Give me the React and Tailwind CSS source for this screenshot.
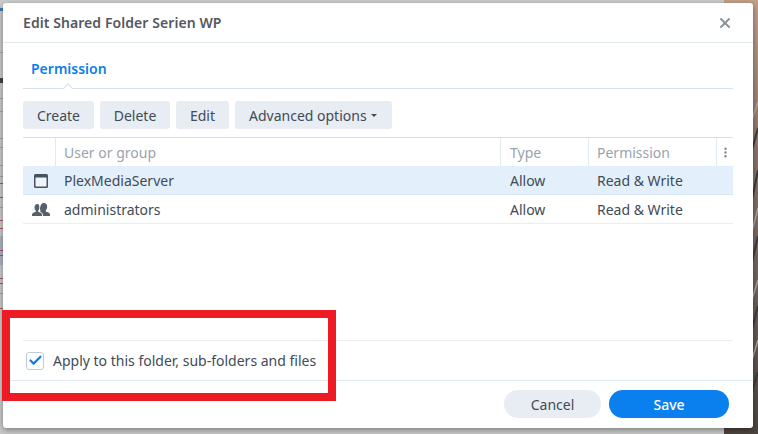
import React from 'react';
import { X, Check, EllipsisVertical } from 'lucide-react';

const rows = [
  { name: 'PlexMediaServer', icon: 'app', selected: true },
  { name: 'administrators', icon: 'group', selected: false },
];

const redTicks = [183, 197, 220, 228, 250, 255, 278, 283, 308];
const grayTicks = [52, 98, 111, 138, 147, 165, 176, 207, 293];

const AppIcon = () => (
  <svg width="14" height="14" viewBox="0 0 14 14" fill="none">
    <rect x="0" y="0" width="14" height="14" rx="1.500" fill="#46525f" />
    <rect x="1.500" y="3.500" width="11" height="9" fill="#eef4fa" />
  </svg>
);

const GroupIcon = () => (
  <svg width="18" height="13" viewBox="0 0 18 13" fill="#55606c">
    <path d="M11.800 0c2.200 0 3.400 1.600 3.400 3.700 0 1.500-.6 2.800-1.400 3.500v1.300c1.500.5 4.200 1.300 4.200 2.800V13h-7v-1.300c0-1.300-1.200-2.200-2.600-2.800V7.200C7.600 6.500 8 5 8.400 3.500 8.800 1.500 10 0 11.800 0z" />
    <path d="M5.600 1C3.600 1 2.500 2.500 2.500 4.400c0 1.300.5 2.500 1.300 3.200v1.200C2.400 9.300 0 10 0 11.500V13h10v-1.500c0-1.500-2.400-2.200-3.800-2.700V7.600C7 6.900 7.300 5.700 7.300 4.400 7.300 2.500 7 1 5.600 1z" />
  </svg>
);

export default function App() {
  return (
    <div className="relative w-[758px] h-[434px] overflow-hidden bg-[#cbcbcb] pt-[3px] pl-[3px] font-['Noto_Sans',sans-serif] text-[14px] text-[#414b55]">
      {/* what shows of the desktop behind the dialog */}
      <svg className="absolute inset-0" width="758" height="434" viewBox="0 0 758 434">
        <defs>
          <linearGradient id="wall" x1="0" y1="0" x2="0" y2="1">
            <stop offset="0" stopColor="#c4a08a" />
            <stop offset="0.35" stopColor="#8a7468" />
            <stop offset="0.65" stopColor="#6f625c" />
            <stop offset="1" stopColor="#4d443f" />
          </linearGradient>
        </defs>
        <rect x="724" y="0" width="34" height="434" fill="url(#wall)" />
        <path d="M752 150l6-22M752 200l6-30M752 262l6-26M752 330l6-24M752 392l6-20" stroke="#3f3a3a" strokeWidth="2" />
        <path d="M752 120l6-18M752 232l6-24M752 300l6-20M752 360l6-20" stroke="#b5a69c" strokeWidth="1.500" />
        <rect x="0" y="236" width="3" height="29" fill="#aeb6c0" />
        {grayTicks.map((y) => (
          <rect key={y} x="0" y={y} width="3" height="1" fill="#9aa4ae" />
        ))}
        {redTicks.map((y) => (
          <rect key={y} x="0" y={y} width="3" height="1" fill="#b8525a" />
        ))}
        <rect x="0" y="8" width="3" height="3" fill="#3d7fc0" />
        <rect x="0" y="78" width="3" height="5" fill="#4a4038" />
      </svg>

      <div className="relative flex flex-col w-[750px] h-[425px] bg-white rounded-[3px] shadow-[0_2px_6px_rgba(0,0,0,0.4)]">
        <div className="flex items-center justify-between h-[40px] px-[20px] border-b border-[#e3e9f0] shrink-0">
          <span className="font-semibold text-[#55595e] tracking-[0.07px]">Edit Shared Folder Serien WP</span>
          <X size={16} strokeWidth={3} className="text-[#8b939b]" />
        </div>

        <div className="flex flex-col flex-1 px-[20px] min-h-0">
          <div className="relative h-[46px] border-b border-[#d7e1ec] shrink-0 pt-[17px] pl-[8px]">
            <span className="font-semibold text-[#0a7fee] leading-[18px] block">Permission</span>
            <span className="absolute left-[39px] bottom-[-1px] w-[11px] h-[6px] overflow-hidden">
              <span className="block w-[8px] h-[8px] ml-[1.500px] mt-[2px] rotate-45 bg-white border-l border-t border-[#d7e1ec]" />
            </span>
          </div>

          <div className="flex gap-[6px] mt-[12px] shrink-0">
            <button className="w-[71px] h-[28px] rounded-[3px] bg-[#e8edf4]">Create</button>
            <button className="w-[70px] h-[28px] rounded-[3px] bg-[#e8edf4]">Delete</button>
            <button className="w-[53px] h-[28px] rounded-[3px] bg-[#e8edf4]">Edit</button>
            <button className="flex items-center gap-[4px] w-[157px] h-[28px] pl-[14px] rounded-[3px] bg-[#e8edf4]">
              Advanced options
              <span className="w-0 h-0 border-x-[3.500px] border-x-transparent border-t-[3px] border-t-[#414b55]" />
            </button>
          </div>

          <div className="mt-[8px] border-t border-[#d7e1ec] shrink-0">
            <div className="flex h-[28px] text-[#9aa3ac]">
              <div className="w-[33px] border-r border-[#e3e9f0]" />
              <div className="flex-1 pl-[8px] leading-[29px] border-r border-[#e3e9f0]">User or group</div>
              <div className="w-[88px] pl-[9px] leading-[29px] border-r border-[#e3e9f0]">Type</div>
              <div className="w-[128px] pl-[8px] leading-[29px] border-r border-[#e3e9f0]">Permission</div>
              <div className="w-[16px] flex items-center justify-center">
                <EllipsisVertical size={13} strokeWidth={2.500} className="text-[#7c858e]" />
              </div>
            </div>
            {rows.map((row) => (
              <div
                key={row.name}
                className={`flex items-center h-[29px] pt-[1px] border-b ${row.selected ? 'bg-[#e3f0fc] border-[#d7e6f5]' : 'border-[#e8edf4]'}`}
              >
                <div className="w-[33px] flex items-center justify-center pl-[3px]">
                  {row.icon === 'app' ? <AppIcon /> : <GroupIcon />}
                </div>
                <div className="flex-1 pl-[8px]">{row.name}</div>
                <div className="w-[88px] pl-[9px]">Allow</div>
                <div className="w-[144px] pl-[8px]">Read &amp; Write</div>
              </div>
            ))}
          </div>

          <div className="mt-auto flex items-center h-[40px] border-t border-[#e8edf4] shrink-0 pl-[3px] gap-[9px]">
            <span className="flex items-center justify-center w-[18px] h-[18px] rounded-[3px] border border-[#c2ccd8] bg-white">
              <Check size={15} strokeWidth={3.500} className="text-[#0a7fee]" />
            </span>
            Apply to this folder, sub-folders and files
          </div>
        </div>

        <div className="flex justify-end gap-[8px] h-[48px] pt-[9px] pr-[24px] border-t border-[#e3e9f0] shrink-0">
          <button className="w-[97px] h-[28px] rounded-full bg-[#e8edf4]">Cancel</button>
          <button className="w-[120px] h-[28px] rounded-full bg-[#0a7fee] text-white font-medium">Save</button>
        </div>
      </div>

      {/* red annotation box drawn over the screenshot */}
      <div className="absolute left-[2px] top-[310px] w-[334px] h-[91px] border-[8px] border-[#ed1c24]" />
    </div>
  );
}
